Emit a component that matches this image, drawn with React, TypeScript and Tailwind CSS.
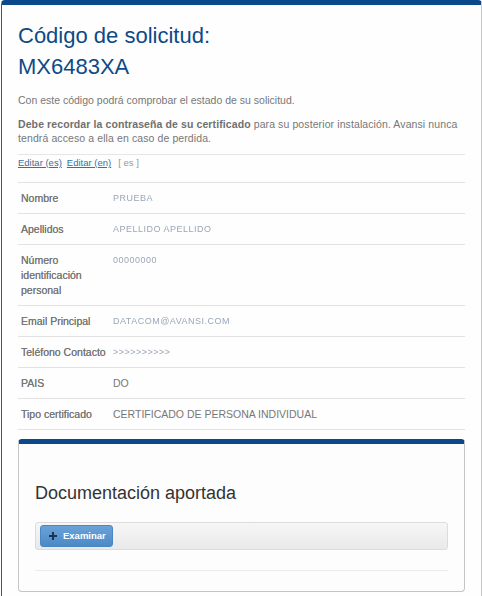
const rows: { label: string; value: string; blur?: boolean }[] = [
  { label: "Nombre", value: "PRUEBA", blur: true },
  { label: "Apellidos", value: "APELLIDO APELLIDO", blur: true },
  { label: "Número identificación personal", value: "00000000", blur: true },
  { label: "Email Principal", value: "DATACOM@AVANSI.COM", blur: true },
  { label: "Teléfono Contacto", value: ">>>>>>>>>>", blur: true },
  { label: "PAIS", value: "DO" },
  { label: "Tipo certificado", value: "CERTIFICADO DE PERSONA INDIVIDUAL" },
];

function PlusIcon() {
  return (
    <svg width="8" height="8" viewBox="0 0 8 8" className="shrink-0">
      <path d="M3 0h2v3h3v2H5v3H3V5H0V3h3z" fill="#1c3553" />
    </svg>
  );
}

export default function App() {
  return (
    <div className="min-h-[620px] bg-white pl-px font-['Liberation_Sans',Arial,sans-serif]">
      {/* Main panel */}
      <div className="min-h-[620px] rounded-t-[4px] border-t-[5px] border-l border-r border-t-[#0b4a8a] border-l-[#2a5a8a] border-r-[#c9c9c9] bg-[#fefefe] px-4 pb-6 pt-[15px]">
        <h1 className="text-[22px] leading-[31px] text-[#0d4a86]">
          Código de solicitud:
          <br />
          MX6483XA
        </h1>

        <p className="mt-[11px] text-[10.5px] leading-[15px] text-[#777]">
          Con este código podrá comprobar el estado de su solicitud.
        </p>
        <p className="mt-[9px] text-[10.5px] leading-[14px] tracking-[0.1px] text-[#777]">
          <span className="font-bold text-[#707070]">Debe recordar la contraseña de su certificado</span> para su
          posterior instalación. Avansi nunca tendrá acceso a ella en caso de perdida.
        </p>

        <div className="mt-[9px] border-t border-[#e6e6e6] text-[9.5px] leading-[15px]">
          <a className="text-[#3a6f9e] underline">Editar (es)</a>
          <a className="ml-[5px] text-[#3a6f9e] underline">Editar (en)</a>
          <span className="ml-[7px] text-[#999]">[ es ]</span>
        </div>

        <table className="mt-[12px] w-full border-collapse border-b border-[#e2e2e2] text-[10.5px] leading-[15px]">
          <tbody>
            {rows.map((r) => (
              <tr key={r.label} className="border-t border-[#e2e2e2]">
                <td className="w-[92px] px-[3px] py-[7.5px] align-top text-[#777] [text-shadow:0_0_0.3px_#777]">
                  {r.label}
                </td>
                <td className="px-[3px] py-[7.5px] align-top text-[#777]">
                  {r.blur ? (
                    <span className="block text-[9px] leading-[15px] tracking-[0.5px] text-[#9aa6b8] blur-[0.5px]">
                      {r.value}
                    </span>
                  ) : (
                    r.value
                  )}
                </td>
              </tr>
            ))}
          </tbody>
        </table>

        {/* Documentation panel */}
        <div className="mt-[9px] rounded-[4px] border border-t-[5px] border-[#c4c4c4] border-t-[#0b4a8a] bg-[#fdfdfd] px-4 pb-[20px] pt-[37px]">
          <h3 className="text-[18px] leading-[24px] text-[#333]">Documentación aportada</h3>
          <div className="mt-[17px] flex h-7 items-center rounded-[3px] border border-[#dcdcdc] bg-gradient-to-b from-[#f6f6f6] to-[#e9e9e9] px-[4px]">
            <button className="flex h-[22px] items-center gap-[6px] rounded-[3px] border border-[#4a86c0] bg-gradient-to-b from-[#6aa2d8] to-[#4a8ac6] pl-[8px] pr-[6px] text-[9.5px] font-bold text-white">
              <PlusIcon />
              Examinar
            </button>
          </div>
          <div className="mt-5 border-t border-[#ececec]" />
        </div>
      </div>
    </div>
  );
}
